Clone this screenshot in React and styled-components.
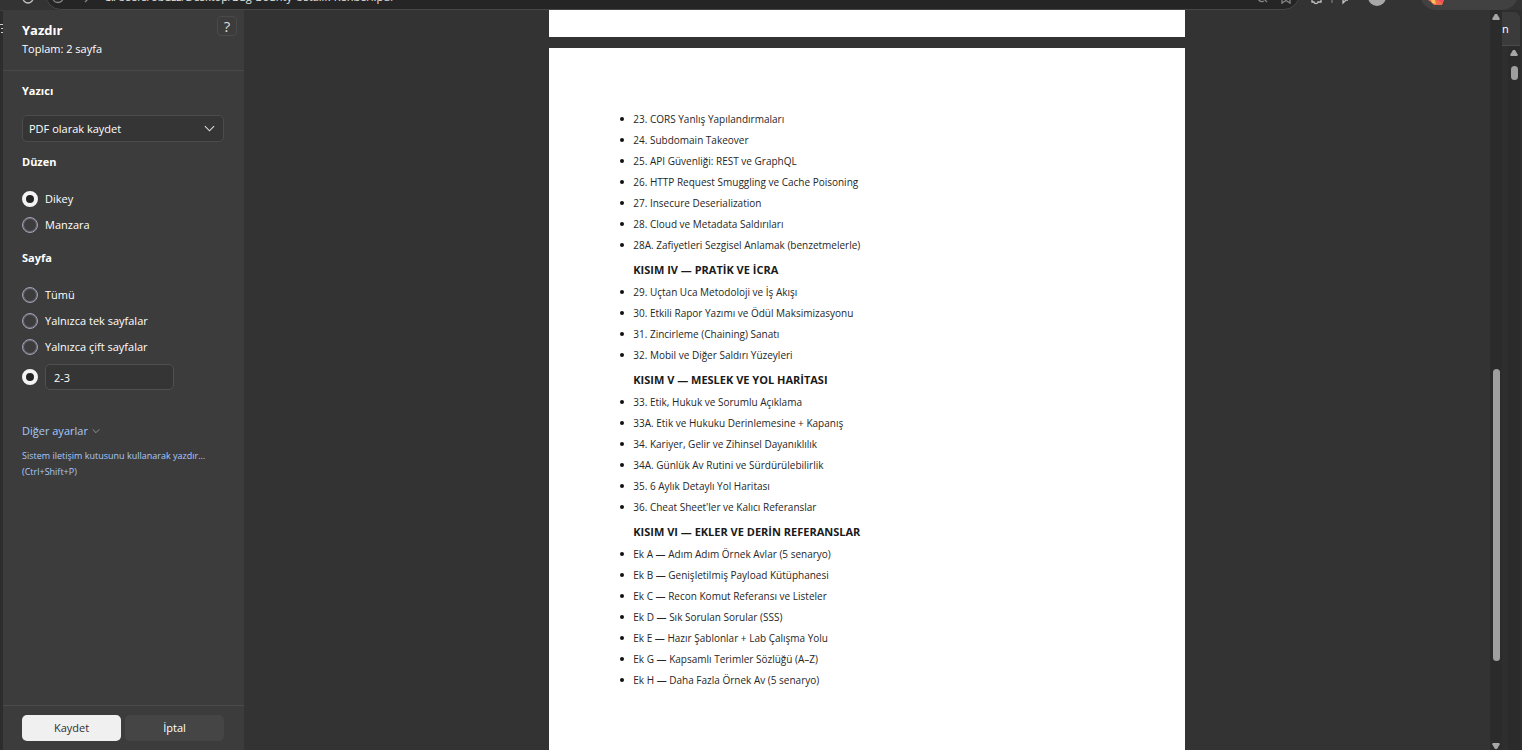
import React, { useState } from "react";
import styled, { createGlobalStyle } from "styled-components";

const GlobalStyle = createGlobalStyle`
    * {
        box-sizing: border-box;
    }
    body {
        margin: 0;
        background: #333333;
        color: #ffffff;
        font-family: "Open Sans", "Noto Sans", sans-serif;
        font-size: 11px;
        line-height: 16px;
    }
    button, input, select {
        font: inherit;
        color: inherit;
    }
    ul {
        list-style: none;
        margin: 0;
        padding: 0;
    }
`

const Window = styled.div`
    display: flex;
    flex-direction: column;
    height: 100vh;
    overflow: hidden;
`

/* Browser toolbar, scrolled almost out of view */
const Toolbar = styled.div`
    display: flex;
    align-items: flex-end;
    flex: none;
    height: 10px;
    padding-left: 20px;
    overflow: hidden;
    background: #333333;
`

const ToolIcon = styled.svg`
    display: block;
    flex: none;
    width: ${props => props.$width || 16}px;
    height: 10px;
    fill: none;
    stroke: #c4c4c4;
    stroke-width: 1.3;
`

const AddressBar = styled.div`
    display: flex;
    align-items: flex-end;
    flex: 1;
    height: 32px;
    margin-left: 9px;
    padding: 0 4px;
    border: 1px solid #474747;
    border-radius: 16px;
    background: #252525;
`

const Address = styled.div`
    flex: 1;
    height: 20px;
    padding-left: 12px;
    color: #e6e6e6;
    line-height: 16px;
    white-space: nowrap;
`

const ToolGroup = styled.div`
    display: flex;
    align-items: flex-end;
    gap: 7px;
    padding: 0 25px 0 8px;
`

const UpdatePill = styled.div`
    display: flex;
    align-items: flex-end;
    width: 98px;
    height: 32px;
    margin-right: 4px;
    padding-left: 8px;
    border-radius: 16px;
    background: #414141;
`

const Body = styled.div`
    display: flex;
    flex: 1;
    min-height: 0;
`

const LeftEdge = styled.div`
    width: 3px;
    padding-top: 10px;
    border-top: 1px solid #3f3f3f;
    background: #2d2d2d;
`

const Sidebar = styled.form`
    display: flex;
    flex-direction: column;
    flex: none;
    width: 241px;
    background: #3c3c3c;
`

const Header = styled.header`
    display: flex;
    justify-content: space-between;
    padding: 6px 7px 13px 19px;
    border-bottom: 1px solid #484848;
`

const Title = styled.h1`
    margin: 5px 0 2px;
    font-size: 13px;
    line-height: 18px;
`

const HelpButton = styled.button`
    width: 20px;
    height: 20px;
    padding: 0;
    border: 1px solid #4a4a4a;
    border-radius: 4px;
    background: #3c3c3c;
    color: #dedede;
    font-size: 15px;
    line-height: 18px;
`

const Settings = styled.div`
    flex: 1;
    padding: 12px 20px 0 19px;
`

const SectionTitle = styled.h2`
    margin: 0;
    font-size: 11px;
    line-height: 16px;
`

const Fieldset = styled.fieldset`
    margin: 12px 0 0;
    padding: 0;
    border: 0;

    legend {
        padding: 0;
        margin-bottom: 16px;
        font-weight: bold;
    }
`

const SelectBox = styled.div`
    display: grid;
    align-items: center;
    margin-top: 16px;

    > * {
        grid-area: 1 / 1;
    }
    svg {
        justify-self: end;
        margin-right: 9px;
        pointer-events: none;
    }
`

const Select = styled.select`
    appearance: none;
    width: 100%;
    height: 27px;
    padding: 0 6px;
    border: 1px solid #4c4c4c;
    border-radius: 5px;
    background: #353535;
`

const Option = styled.label`
    display: flex;
    align-items: center;
    gap: 7px;
    height: 26px;
`

const Radio = styled.input`
    appearance: none;
    flex: none;
    width: 16px;
    height: 16px;
    margin: 0;
    border: 1px solid #a5a3b8;
    border-radius: 50%;
    box-shadow: inset 0 0 0 1px #6b6a76;

    &:checked {
        border: 4px solid #f3f3f3;
        background: #242424;
        box-shadow: none;
    }
`

const RangeRow = styled.div`
    display: flex;
    align-items: center;
    gap: 7px;
    margin-top: 4px;
`

const RangeInput = styled.input`
    width: 129px;
    height: 26px;
    padding: 0 8px;
    border: 1px solid #505050;
    border-radius: 5px;
    background: #353535;
`

const Links = styled.div`
    display: flex;
    flex-direction: column;
    align-items: flex-start;
    gap: 9px;
    margin-top: 33px;
`

const MoreButton = styled.button`
    display: flex;
    align-items: center;
    gap: 4px;
    padding: 0;
    border: 0;
    background: none;
    color: #a9c8f8;
`

const SystemLink = styled.a`
    color: #a9c8f8;
    font-size: 9px;
    text-decoration: none;
`

const Footer = styled.footer`
    display: flex;
    gap: 4px;
    padding: 9px 20px 9px 19px;
    border-top: 1px solid #4b4b4b;
`

const ActionButton = styled.button`
    flex: 1;
    height: 26px;
    border: 0;
    border-radius: 5px;
    background: ${props => props.$primary ? "#f0f0f0" : "#454545"};
    color: ${props => props.$primary ? "#303030" : "#ffffff"};
`

const Preview = styled.main`
    display: flex;
    flex-direction: column;
    align-items: center;
    flex: 1;
    gap: 11px;
    background: #333333;
`

const PreviousPage = styled.div`
    flex: none;
    width: 51%;
    height: 27px;
    background: #ffffff;
`

const Paper = styled.article`
    flex: 1;
    width: 51%;
    padding: 60px 71px;
    background: #ffffff;
    color: #262626;
`

const Item = styled.li`
    display: flex;
    align-items: center;
    gap: 9px;
    height: 21px;
    font-size: 10px;
    white-space: nowrap;

    &:before {
        content: "";
        width: 4px;
        height: 4px;
        border-radius: 50%;
        background: #111111;
    }
`

const PartTitle = styled.h3`
    margin: 4px 0 1px 13px;
    color: #1a1a1a;
    font-size: 11px;
    line-height: 21px;
`

const Track = styled.div`
    display: flex;
    flex-direction: column;
    align-items: center;
    flex: none;
    width: 12px;
    padding: 4px 0 1px;
    background: #2b2b2b;
`

const Thumb = styled.div`
    width: 7px;
    height: ${props => props.$height}px;
    margin-top: ${props => props.$top}px;
    margin-bottom: auto;
    border-radius: 4px;
    background: #9f9f9f;
`

const RightEdge = styled.div`
    display: flex;
    flex-direction: column;
    width: 20px;
    padding: 2px 2px 0 0;
    background: #2e2e2e;
`

const ViewerBar = styled.div`
    height: 34px;
    border-bottom: 1px solid #4b4b4b;
    border-radius: 0 6px 0 0;
    background: #3b3b3b;
    line-height: 34px;
`

const ViewerScroll = styled.div`
    display: flex;
    justify-content: flex-end;
    flex: 1;
`

const parts = [
    {
        items: [
            "23. CORS Yanlış Yapılandırmaları",
            "24. Subdomain Takeover",
            "25. API Güvenliği: REST ve GraphQL",
            "26. HTTP Request Smuggling ve Cache Poisoning",
            "27. Insecure Deserialization",
            "28. Cloud ve Metadata Saldırıları",
            "28A. Zafiyetleri Sezgisel Anlamak (benzetmelerle)"
        ]
    },
    {
        title: "KISIM IV — PRATİK VE İCRA",
        items: [
            "29. Uçtan Uca Metodoloji ve İş Akışı",
            "30. Etkili Rapor Yazımı ve Ödül Maksimizasyonu",
            "31. Zincirleme (Chaining) Sanatı",
            "32. Mobil ve Diğer Saldırı Yüzeyleri"
        ]
    },
    {
        title: "KISIM V — MESLEK VE YOL HARİTASI",
        items: [
            "33. Etik, Hukuk ve Sorumlu Açıklama",
            "33A. Etik ve Hukuku Derinlemesine + Kapanış",
            "34. Kariyer, Gelir ve Zihinsel Dayanıklılık",
            "34A. Günlük Av Rutini ve Sürdürülebilirlik",
            "35. 6 Aylık Detaylı Yol Haritası",
            "36. Cheat Sheet'ler ve Kalıcı Referanslar"
        ]
    },
    {
        title: "KISIM VI — EKLER VE DERİN REFERANSLAR",
        items: [
            "Ek A — Adım Adım Örnek Avlar (5 senaryo)",
            "Ek B — Genişletilmiş Payload Kütüphanesi",
            "Ek C — Recon Komut Referansı ve Listeler",
            "Ek D — Sık Sorulan Sorular (SSS)",
            "Ek E — Hazır Şablonlar + Lab Çalışma Yolu",
            "Ek G — Kapsamlı Terimler Sözlüğü (A–Z)",
            "Ek H — Daha Fazla Örnek Av (5 senaryo)"
        ]
    }
]

const Chevron = ({ size, color }) => (
    <svg width={size} height={size} viewBox="0 0 12 12" fill="none" stroke={color} strokeWidth="1.2">
        <path d="M1 3.5l5 5 5-5" />
    </svg>
)

const Arrow = ({ down }) => (
    <svg width="8" height="6" viewBox="0 0 8 6" fill="#a6a6a6">
        <path d={down ? "M1 0h6l1 1-3 5H3L0 1z" : "M3 0h2l3 5-1 1H1L0 5z"} />
    </svg>
)

const BrowserToolbar = () => (
    <Toolbar>
        <ToolIcon><path d="M3-2a5 5 0 0 0 10 0" /></ToolIcon>
        <AddressBar>
            <ToolIcon><path d="M3-1a5 4.500 0 0 0 10 0" stroke="#858585" /></ToolIcon>
            <ToolIcon $width={26}><path d="M19 3l3-3" stroke="#858585" /></ToolIcon>
            <Address>C:/Users/obuzz/Desktop/Bug-Bounty-Ustalik-Rehberi.pdf</Address>
            <ToolIcon $width={21}>
                <path d="M1-1a4 4 0 0 0 6 3M7 0l3 3" stroke="#858585" />
            </ToolIcon>
            <ToolIcon $width={17}>
                <path d="M4-1v5l4-2.500 4 2.500v-5" stroke="#858585" />
            </ToolIcon>
        </AddressBar>
        <ToolGroup>
            <ToolIcon>
                <path d="M4-1v3h2c0 2 4 2 4 0h3v-3" />
            </ToolIcon>
            <ToolIcon $width={2}><path d="M1 0v3" stroke="#777777" /></ToolIcon>
            <ToolIcon $width={12}><path d="M3-1v4l3-3h2" /></ToolIcon>
            <ToolIcon $width={36}>
                <circle cx="18" cy="-3" r="9" fill="#a7a7a7" stroke="none" />
                <path d="M12 0c1-3 11-3 12 0" fill="#d0d0d0" stroke="none" />
            </ToolIcon>
        </ToolGroup>
        <UpdatePill>
            <ToolIcon>
                <path d="M0 0h16l-2 5H6L3 2z" fill="#ef6a4a" stroke="none" />
                <path d="M3 0h4l1 4-4-1z" fill="#f7c15c" stroke="none" />
                <path d="M10 0h5l-1 3z" fill="#f4455f" stroke="none" />
            </ToolIcon>
        </UpdatePill>
    </Toolbar>
)

const App = () => {
    const [layout, setLayout] = useState("Dikey")
    const [pages, setPages] = useState("custom")
    const [range, setRange] = useState("2-3")

    return (
        <Window>
            <GlobalStyle />
            <BrowserToolbar />
            <Body>
                <LeftEdge>
                    <svg width="3" height="9" viewBox="0 0 3 9" fill="#d0d0d0">
                        <path d="M0 0h3v1H0zM1 4h2v1H1zM1 8h2v1H1z" />
                    </svg>
                </LeftEdge>
                <Sidebar onSubmit={e => e.preventDefault()}>
                    <Header>
                        <div>
                            <Title>Yazdır</Title>
                            <div>Toplam: 2 sayfa</div>
                        </div>
                        <HelpButton type="button" aria-label="Yardım">?</HelpButton>
                    </Header>
                    <Settings>
                        <SectionTitle><label htmlFor="printer">Yazıcı</label></SectionTitle>
                        <SelectBox>
                            <Select id="printer">
                                <option>PDF olarak kaydet</option>
                            </Select>
                            <Chevron size={11} color="#dddddd" />
                        </SelectBox>
                        <Fieldset>
                            <legend>Düzen</legend>
                            {["Dikey", "Manzara"].map(name => (
                                <Option key={name}>
                                    <Radio
                                        type="radio"
                                        name="layout"
                                        checked={layout === name}
                                        onChange={() => setLayout(name)}
                                    />
                                    {name}
                                </Option>
                            ))}
                        </Fieldset>
                        <Fieldset>
                            <legend>Sayfa</legend>
                            {["Tümü", "Yalnızca tek sayfalar", "Yalnızca çift sayfalar"].map(name => (
                                <Option key={name}>
                                    <Radio
                                        type="radio"
                                        name="pages"
                                        checked={pages === name}
                                        onChange={() => setPages(name)}
                                    />
                                    {name}
                                </Option>
                            ))}
                            <RangeRow>
                                <Radio
                                    type="radio"
                                    name="pages"
                                    aria-label="Sayfa aralığı seç"
                                    checked={pages === "custom"}
                                    onChange={() => setPages("custom")}
                                />
                                <RangeInput
                                    type="text"
                                    aria-label="Sayfa aralığı"
                                    value={range}
                                    onChange={e => setRange(e.target.value)}
                                />
                            </RangeRow>
                        </Fieldset>
                        <Links>
                            <MoreButton type="button">
                                Diğer ayarlar
                                <Chevron size={8} color="#a0a8b8" />
                            </MoreButton>
                            <SystemLink href="#system">
                                Sistem iletişim kutusunu kullanarak yazdır... (Ctrl+Shift+P)
                            </SystemLink>
                        </Links>
                    </Settings>
                    <Footer>
                        <ActionButton type="submit" $primary>Kaydet</ActionButton>
                        <ActionButton type="button">İptal</ActionButton>
                    </Footer>
                </Sidebar>
                <Preview>
                    <PreviousPage />
                    <Paper>
                        {parts.map((part, i) => (
                            <section key={i}>
                                {part.title && <PartTitle>{part.title}</PartTitle>}
                                <ul>
                                    {part.items.map(item => <Item key={item}>{item}</Item>)}
                                </ul>
                            </section>
                        ))}
                    </Paper>
                </Preview>
                <Track>
                    <Arrow />
                    <Thumb $top={349} $height={292} />
                    <Arrow down />
                </Track>
                <RightEdge>
                    <ViewerBar>n</ViewerBar>
                    <ViewerScroll>
                        <Track>
                            <Arrow />
                            <Thumb $top={10} $height={14} />
                        </Track>
                    </ViewerScroll>
                </RightEdge>
            </Body>
        </Window>
    )
}

export default App;
